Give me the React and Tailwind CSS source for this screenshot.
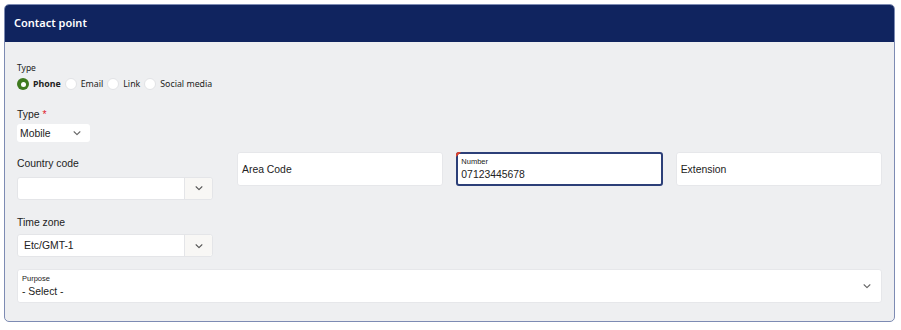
import React from "react";

function Chevron({ className = "" }) {
  return (
    <svg viewBox="0 0 12 12" className={`w-[10px] h-[10px] ${className}`} fill="none" stroke="currentColor" strokeWidth="1.3" strokeLinecap="round" strokeLinejoin="round">
      <path d="M2.5 4.5 6 8l3.5-3.5" />
    </svg>
  );
}

function Radio({ label, checked }) {
  return (
    <label className="flex items-center gap-[4px]">
      {checked ? (
        <span className="w-[12px] h-[12px] rounded-full bg-[#3f7a1f] flex items-center justify-center">
          <span className="w-[5px] h-[5px] rounded-full bg-white" />
        </span>
      ) : (
        <span className="w-[12px] h-[12px] rounded-full bg-white border border-[#e2e3e6]" />
      )}
      <span className={`text-[8.8px] text-[#222] ${checked ? "font-bold" : ""}`}>{label}</span>
    </label>
  );
}

function ComboSelect({ value }) {
  return (
    <div className="flex h-[23px] w-[196px] bg-white rounded-[3px] border border-[#e4e5e8]">
      <div className="flex-1 flex items-center px-[6px] text-[10.4px] text-[#222]">{value}</div>
      <div className="w-[28px] flex items-center justify-center border-l border-[#e4e5e8] bg-[#f8f7f5] rounded-r-[3px] text-[#555]">
        <Chevron />
      </div>
    </div>
  );
}

function Box({ children, active }) {
  return (
    <div
      className={`relative flex-1 h-[34px] bg-white rounded-[3px] flex flex-col justify-center ${
        active ? "border-2 border-[#2c3f78] px-[3px]" : "border border-[#e6e7ea] px-[4px]"
      }`}
    >
      {active && (
        <span className="absolute -top-[2px] -left-[2px] w-0 h-0 border-t-[5px] border-r-[5px] border-t-[#e0402a] border-r-transparent rounded-tl-[3px]" />
      )}
      {children}
    </div>
  );
}

export default function App() {
  return (
    <div className="w-[901px] h-[330px] bg-white pt-[4px] pl-[4px]" style={{ fontFamily: '"Liberation Sans", Arial, sans-serif' }}>
      <div className="w-[891px] h-[318px] rounded-[5px] border border-[#7d8bb3] bg-[#eeeff1] overflow-hidden flex flex-col">
        <div className="h-[37px] bg-[#10245f] flex items-center px-[9px]">
          <span className="text-white text-[11px] font-semibold" style={{ fontFamily: '"Noto Sans", sans-serif' }}>
            Contact point
          </span>
        </div>
        <div className="flex-1 px-[12px] pt-[20px]">
          <div className="text-[8.5px] text-[#222]" style={{ fontFamily: '"Noto Sans", sans-serif' }}>Type</div>
          <div className="flex items-center gap-[4px] mt-[3px]" style={{ fontFamily: '"Noto Sans", sans-serif' }}>
            <Radio label="Phone" checked />
            <Radio label="Email" />
            <Radio label="Link" />
            <Radio label="Social media" />
          </div>

          <div className="mt-[19px] text-[10.4px] text-[#222] leading-none">
            Type <span className="text-[#e0202a]">*</span>
          </div>
          <div className="mt-[4px] w-[73px] h-[18px] bg-white rounded-[3px] flex items-center justify-between px-[3px] text-[10.4px] text-[#222]">
            Mobile
            <Chevron className="text-[#666] mr-[5px]" />
          </div>

          <div className="flex gap-[13px] mt-[10px]">
            <div className="w-[196px] pt-[7px]">
              <div className="text-[10.4px] text-[#222] leading-none">Country code</div>
              <div className="mt-[7px]">
                <ComboSelect value="" />
              </div>
            </div>
            <div className="flex-1 flex gap-[13px] pl-[11px]">
              <Box>
                <span className="text-[10.4px] text-[#222]">Area Code</span>
              </Box>
              <Box active>
                <span className="text-[7.5px] text-[#222] leading-none">Number</span>
                <span className="text-[10.4px] text-[#222] leading-none mt-[4px]">07123445678</span>
              </Box>
              <Box>
                <span className="text-[10.4px] text-[#222]">Extension</span>
              </Box>
            </div>
          </div>

          <div className="mt-[18px] text-[10.4px] text-[#222] leading-none">Time zone</div>
          <div className="mt-[6px]">
            <ComboSelect value="Etc/GMT-1" />
          </div>

          <div className="mt-[12px] h-[34px] bg-white rounded-[3px] border border-[#e6e7ea] flex items-center pl-[4px] pr-[9px]">
            <div className="flex-1 flex flex-col justify-center">
              <span className="text-[7.5px] text-[#222] leading-none">Purpose</span>
              <span className="text-[10.4px] text-[#222] leading-none mt-[4px]">- Select -</span>
            </div>
            <Chevron className="text-[#666]" />
          </div>
        </div>
      </div>
    </div>
  );
}
